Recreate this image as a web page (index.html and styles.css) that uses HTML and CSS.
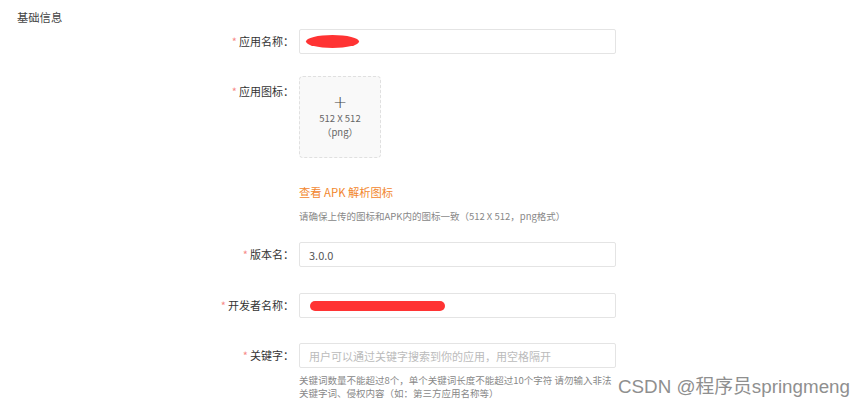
FILE: index.html
```html
<!DOCTYPE html>
<html lang="zh">
<head>
<meta charset="utf-8">
<link rel="stylesheet" href="styles.css">
</head>
<body>
<div class="page">
  <div class="section-title">基础信息</div>
  <div class="form">
    <div class="row row-first">
      <div class="label"><span class="req">*</span>应用名称：</div>
      <div class="control">
        <div class="input"><span class="blob"></span></div>
      </div>
    </div>
    <div class="row row-icon">
      <div class="label label-icon"><span class="req">*</span>应用图标：</div>
      <div class="control">
        <div class="upload">
          <span class="plus">+</span>
          <span class="size">512 X 512</span>
          <span class="fmt">（png）</span>
        </div>
        <a class="link">查看 APK 解析图标</a>
        <div class="help">请确保上传的图标和APK内的图标一致（512 X 512，png格式）</div>
      </div>
    </div>
    <div class="row row-version">
      <div class="label"><span class="req">*</span>版本名：</div>
      <div class="control">
        <div class="input"><span class="value">3.0.0</span></div>
      </div>
    </div>
    <div class="row row-dev">
      <div class="label"><span class="req">*</span>开发者名称：</div>
      <div class="control">
        <div class="input"><span class="stroke"></span></div>
      </div>
    </div>
    <div class="row row-kw">
      <div class="label"><span class="req">*</span>关键字：</div>
      <div class="control">
        <div class="input"><span class="placeholder">用户可以通过关键字搜索到你的应用，用空格隔开</span></div>
        <div class="help help-kw">关键词数量不能超过8个，单个关键词长度不能超过10个字符 请勿输入非法关键字词、侵权内容（如：第三方应用名称等）</div>
      </div>
    </div>
  </div>
  <div class="watermark">CSDN @程序员springmeng</div>
</div>
</body>
</html>
```
FILE: styles.css
```css
* { box-sizing: border-box; }
html, body { margin: 0; padding: 0; background: #fff; }
body {
  font-family: "Noto Sans CJK SC", "Noto Sans", sans-serif;
  color: #333;
  font-size: 11px;
}
.page {
  position: relative;
  width: 865px;
  height: 408px;
  overflow: hidden;
}
.section-title {
  padding: 9px 0 0 17px;
  font-size: 11.3px;
  line-height: 16px;
  color: #444;
}
.form { display: flex; flex-direction: column; }
.row { display: flex; align-items: flex-start; }
.row-first { margin-top: 4px; }
.row-icon { margin-top: 22px; }
.row-version { margin-top: 19px; }
.row-dev { margin-top: 26px; }
.row-kw { margin-top: 25px; }
.label {
  width: 299px;
  padding-right: 5px;
  text-align: right;
  font-size: 11px;
  line-height: 25px;
  color: #333;
  white-space: nowrap;
}
.label-icon { padding-top: 3px; }
.req {
  color: #f78a8a;
  font-size: 11px;
  margin-right: 2px;
}
.control { width: 317px; display: flex; flex-direction: column; }
.input {
  height: 25px;
  border: 1px solid #e4e4e4;
  border-radius: 2px;
  display: flex;
  align-items: center;
  padding-left: 9px;
  background: #fff;
}
.value { color: #555; font-size: 11px; }
.placeholder { color: #bbb; font-size: 11px; }
.blob {
  display: inline-block;
  width: 53px;
  height: 13px;
  margin-left: -3px;
  background: #f33;
  border-radius: 50%;
}
.stroke {
  display: inline-block;
  width: 135px;
  height: 10px;
  margin-left: 1px;
  margin-top: 1px;
  background: #f33;
  border-radius: 5px;
}
.upload {
  width: 82px;
  height: 82px;
  border: 1px dashed #e0e0e0;
  border-radius: 4px;
  background: #f9f9f9;
  display: flex;
  flex-direction: column;
  align-items: center;
  padding-top: 17px;
  color: #666;
}
.plus {
  font-size: 17px;
  line-height: 17px;
  font-weight: 300;
  color: #444;
  font-family: "DejaVu Sans", sans-serif;
}
.size { font-size: 9.5px; line-height: 14px; }
.fmt { font-size: 9.5px; line-height: 14px; }
.link {
  margin-top: 26px;
  color: #f2872e;
  font-size: 11.3px;
  line-height: 16px;
}
.help {
  margin-top: 10px;
  color: #888;
  font-size: 9.5px;
  line-height: 13px;
}
.help-kw { margin-top: 6px; padding-right: 4px; }
.watermark {
  position: absolute;
  left: 618px;
  top: 376px;
  font-family: "Liberation Sans", "Noto Sans CJK SC", sans-serif;
  font-size: 18.8px;
  line-height: 22px;
  color: #8f8f8f;
  white-space: nowrap;
}
```
